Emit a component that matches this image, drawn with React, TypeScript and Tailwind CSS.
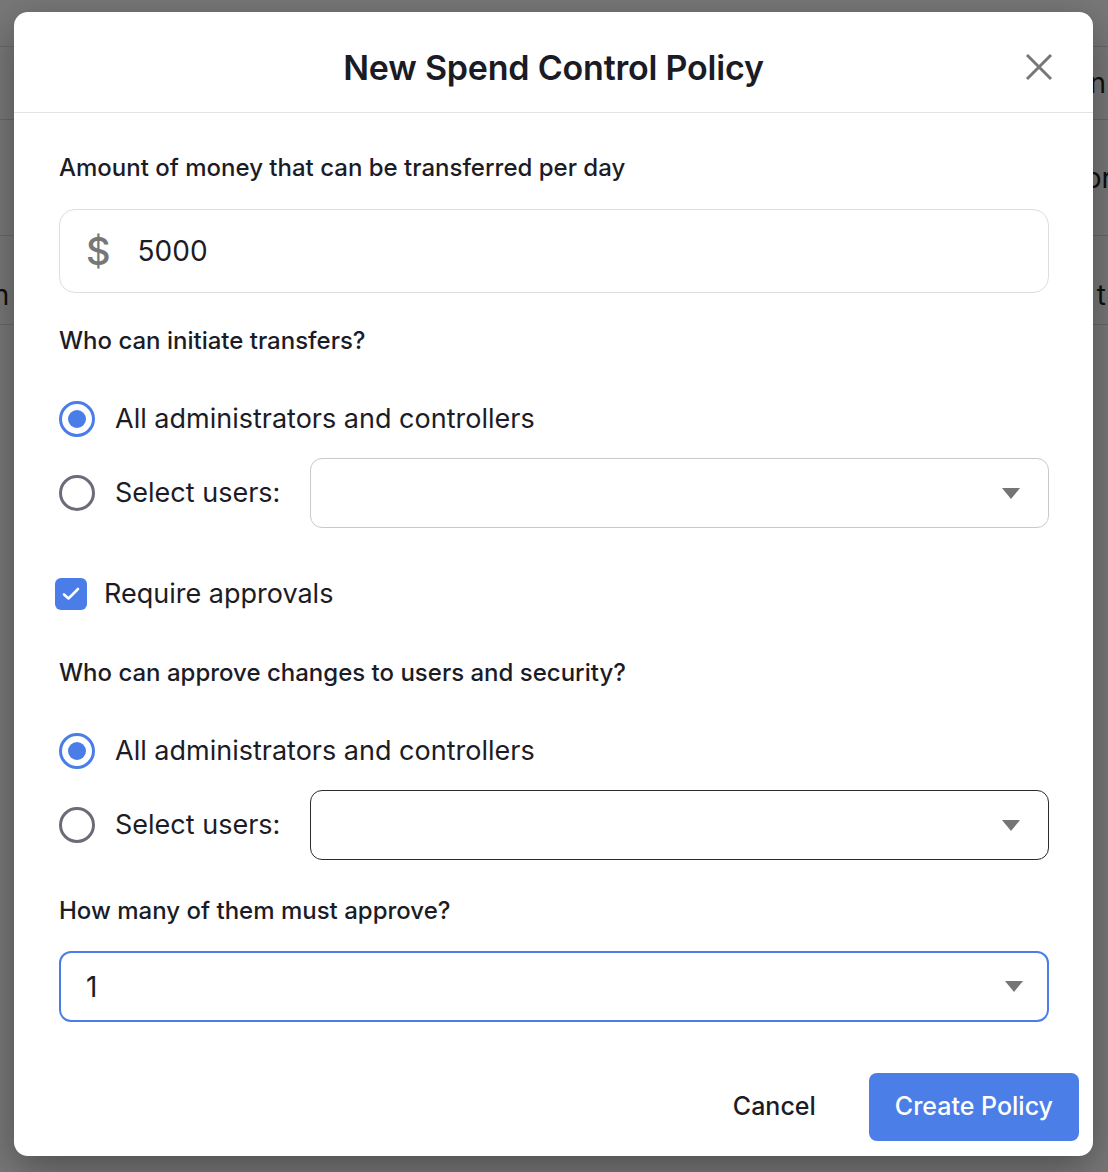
import React from "react";

const font = { fontFamily: "Inter, 'Noto Sans', sans-serif" };

function Radio({ checked }: { checked?: boolean }) {
  return checked ? (
    <span className="flex h-[36px] w-[36px] shrink-0 items-center justify-center rounded-full border-[3px] border-[#4a7de8]">
      <span className="h-[18px] w-[18px] rounded-full bg-[#4a7de8]" />
    </span>
  ) : (
    <span className="h-[36px] w-[36px] shrink-0 rounded-full border-[3px] border-[#6c6c78]" />
  );
}

function Caret() {
  return (
    <svg width="18" height="11" viewBox="0 0 18 11" className="shrink-0">
      <path d="M0 0 H18 L9 11 Z" fill="#757575" />
    </svg>
  );
}

function SelectBox({
  className,
  value,
}: {
  className: string;
  value?: string;
}) {
  return (
    <div
      className={
        "flex items-center justify-between rounded-[12px] bg-white pl-[24px] pr-[28px] " +
        className
      }
    >
      <span className="text-[28px] text-[#1b1c26]">{value}</span>
      <Caret />
    </div>
  );
}

function Label({ children, className }: { children: React.ReactNode; className?: string }) {
  return (
    <div className={"text-[24px] font-medium leading-[32px] text-[#1b1c26] " + (className ?? "")}>
      {children}
    </div>
  );
}

function UserChoice({ focusBorder }: { focusBorder?: boolean }) {
  return (
    <>
      <div className="flex h-[44px] items-center gap-[20px]">
        <Radio checked />
        <span className="text-[27px] text-[#1b1c26]">All administrators and controllers</span>
      </div>
      <div className="mt-[17px] flex items-center">
        <Radio />
        <span className="ml-[20px] text-[27px] text-[#1b1c26]">Select users:</span>
        <SelectBox
          className={
            "ml-[30px] h-[70px] flex-1 border " +
            (focusBorder ? "border-[#2a2a30]" : "border-[#c9c9cc]")
          }
        />
      </div>
    </>
  );
}

export default function App() {
  return (
    <div className="relative h-[1172px] w-full overflow-hidden bg-white" style={font}>
      {/* page behind the dialog */}
      <div className="text-[28px] text-[#222]">
        <div className="h-[47px] border-b border-[#ddd]" />
        <div className="flex h-[73px] items-center justify-end border-b border-[#ddd] pr-[2px]">n</div>
        <div className="flex h-[116px] items-center justify-end border-b border-[#ddd] -mr-[20px]">ore</div>
        <div className="flex h-[89px] items-end justify-between border-b border-[#ddd] pb-[8px] -ml-[14px] -mr-[16px]">
          <span>in</span>
          <span>t (</span>
        </div>
      </div>

      {/* overlay */}
      <div className="absolute inset-0 bg-[#000]/[0.53]" />

      {/* dialog */}
      <div className="absolute left-[14px] top-[12px] w-[1079px] rounded-[14px] bg-white shadow-[0_12px_40px_rgba(0,0,0,0.35)]">
        <div className="relative flex h-[101px] items-center justify-center border-b border-[#e3e3e6] pt-[10px]">
          <h1 className="text-[34px] font-semibold tracking-[-0.2px] text-[#1a1b25]">
            New Spend Control Policy
          </h1>
          <button className="absolute right-[40px] top-[41px]">
            <svg width="28" height="28" viewBox="0 0 28 28">
              <path d="M2 2 L26 26 M26 2 L2 26" stroke="#777" strokeWidth="3" />
            </svg>
          </button>
        </div>

        <div className="px-[44px] pl-[45px] pt-[39px]">
          <Label>Amount of money that can be transferred per day</Label>
          <div className="mt-[25px] flex h-[84px] items-center rounded-[16px] border border-[#dedee2] pl-[26px]">
            <span className="text-[38px] font-medium text-[#777]">$</span>
            <span className="ml-[27px] text-[28px] text-[#1b1c26]">5000</span>
          </div>

          <Label className="mt-[32px]">Who can initiate transfers?</Label>
          <div className="mt-[40px]">
            <UserChoice />
          </div>

          <div className="mt-[50px] flex h-[32px] items-center gap-[17px] -ml-[4px]">
            <span className="flex h-[32px] w-[32px] items-center justify-center rounded-[6px] bg-[#4a7de8]">
              <svg width="18" height="14" viewBox="0 0 18 14">
                <path d="M2 7.5 L6.5 11.5 L16 2" fill="none" stroke="white" strokeWidth="2.6" strokeLinecap="round" strokeLinejoin="round" />
              </svg>
            </span>
            <span className="text-[27px] text-[#1b1c26]">Require approvals</span>
          </div>

          <Label className="mt-[47px]">Who can approve changes to users and security?</Label>
          <div className="mt-[40px]">
            <UserChoice focusBorder />
          </div>

          <Label className="mt-[35px]">How many of them must approve?</Label>
          <SelectBox
            value="1"
            className="mt-[24px] h-[71px] border-2 border-[#4a7de8] !pl-[25px] !pr-[24px]"
          />
        </div>

        <div className="mt-[51px] flex items-center justify-end gap-[29px] pb-[15px] pr-[14px]">
          <button className="px-[24px] text-[25px] font-medium text-[#1b1c26]">Cancel</button>
          <button className="h-[68px] rounded-[8px] bg-[#4c7ee8] px-[26px] text-[25px] font-medium text-white">
            Create Policy
          </button>
        </div>
      </div>
    </div>
  );
}
